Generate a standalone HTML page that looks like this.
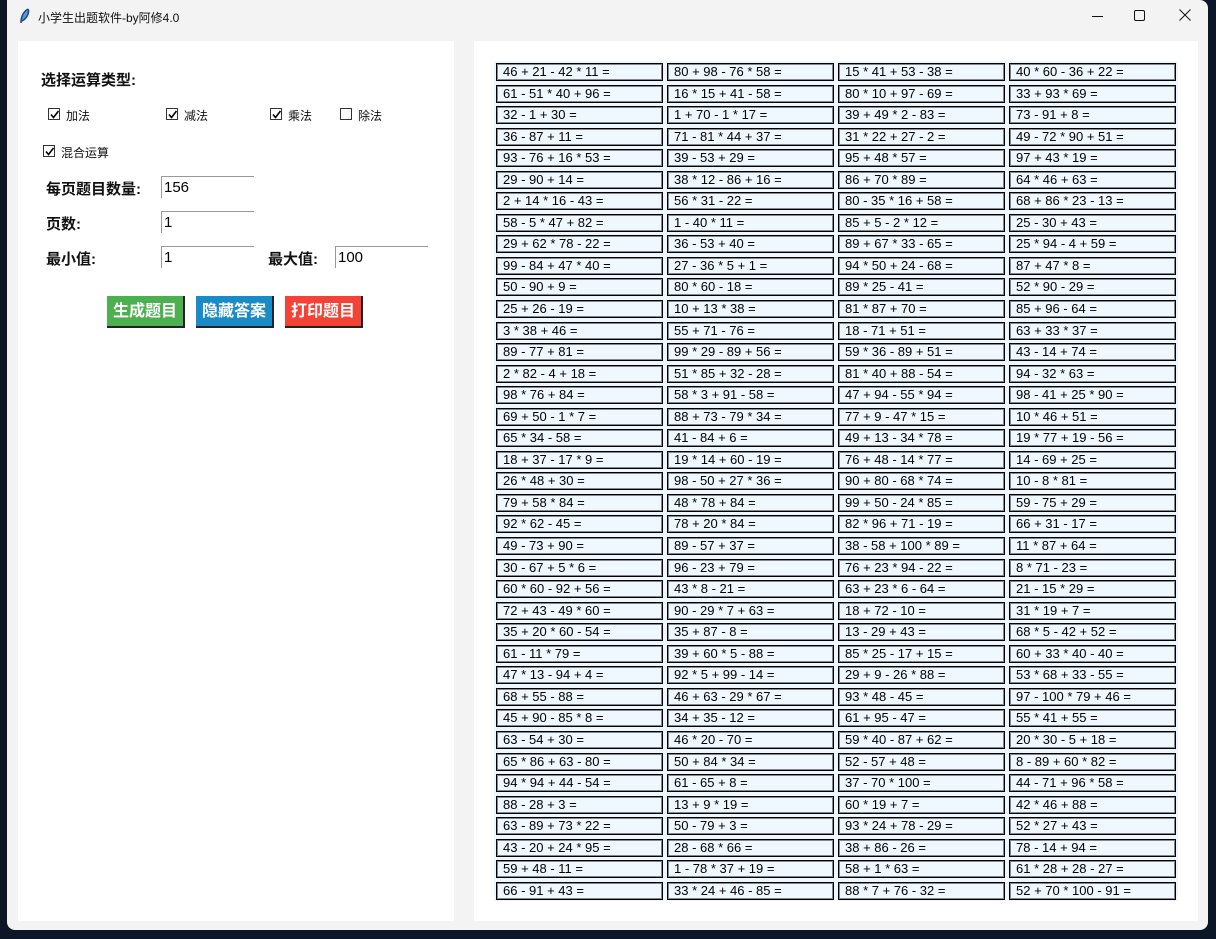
<!DOCTYPE html>
<html><head><meta charset="utf-8">
<style>
*{margin:0;padding:0;box-sizing:border-box}
body{width:1216px;height:939px;background:#0b1626;position:relative;overflow:hidden;font-family:"Liberation Sans","Noto Sans CJK SC",sans-serif}
.win{position:absolute;left:7px;top:0;width:1201px;height:930px;background:#f3f3f3;border-radius:0 8px 8px 8px}
.title{position:absolute;left:38px;top:9px;font-size:12px;color:#111}
.panel{position:absolute;background:#fff}
.abs{position:absolute;white-space:nowrap}
.lbl{font-size:15px;font-weight:bold;color:#111}
.cb{position:absolute;width:12px;height:12px;border:1px solid #333;background:#fff}
.cb svg{position:absolute;left:0;top:0}
.cbl{font-size:12px;color:#111}
.ent{position:absolute;height:22px;width:93px;border-top:1px solid #999;border-left:1px solid #999;font-size:15px;padding-left:2px;line-height:21px;color:#000}
.btn{position:absolute;top:296px;height:32px;width:78px;color:#fff;font-weight:bold;font-size:16px;text-align:center;line-height:31px;border-right:2px solid #222;border-bottom:2px solid #222}
.grid{position:absolute;top:61px;left:494px;width:684px;height:840px;background:#eef6fe}
.col{position:absolute;top:2px;width:167px}
.c{height:18px;margin-bottom:3.55px;border:1px solid #000;box-shadow:inset 0 0 0 1px rgba(0,0,0,.45);background:#f0f8ff;font-size:13px;line-height:16px;padding-left:6px;color:#000;white-space:nowrap}
</style></head><body>
<div class="win">
<svg class="abs" style="left:12px;top:8px" width="12" height="16" viewBox="0 0 12 16"><path d="M9 1 C4 4 2 9 2 15 M9 1 C11 5 7 11 3 13" stroke="#1a4f8a" stroke-width="1.6" fill="#5a9ad6"/></svg>
<div class="title" style="left:31px">小学生出题软件-by阿修4.0</div>
<svg class="abs" style="left:1084px;top:9px" width="14" height="14"><path d="M1 7.5H12" stroke="#111" stroke-width="1"/></svg>
<svg class="abs" style="left:1126px;top:9px" width="14" height="14"><rect x="1.5" y="1.5" width="10" height="10" rx="1.5" fill="none" stroke="#111"/></svg>
<svg class="abs" style="left:1171px;top:8px" width="14" height="14"><path d="M1.5 1.5L12.5 12.5M12.5 1.5L1.5 12.5" stroke="#111"/></svg>
</div>

<div class="panel" style="left:18px;top:41px;width:436px;height:880px"></div>
<div class="panel" style="left:474px;top:41px;width:724px;height:880px"></div>

<div class="abs lbl" style="left:41px;top:69px">选择运算类型:</div>

<div class="cb" style="left:48px;top:108px"><svg width="12" height="12"><path d="M2 5.5L4.5 8.5L9.5 2" stroke="#000" stroke-width="1.6" fill="none"/></svg></div>
<div class="abs cbl" style="left:66px;top:107px">加法</div>
<div class="cb" style="left:166px;top:108px"><svg width="12" height="12"><path d="M2 5.5L4.5 8.5L9.5 2" stroke="#000" stroke-width="1.6" fill="none"/></svg></div>
<div class="abs cbl" style="left:184px;top:107px">减法</div>
<div class="cb" style="left:270px;top:108px"><svg width="12" height="12"><path d="M2 5.5L4.5 8.5L9.5 2" stroke="#000" stroke-width="1.6" fill="none"/></svg></div>
<div class="abs cbl" style="left:288px;top:107px">乘法</div>
<div class="cb" style="left:340px;top:108px"></div>
<div class="abs cbl" style="left:358px;top:107px">除法</div>
<div class="cb" style="left:43px;top:145px"><svg width="12" height="12"><path d="M2 5.5L4.5 8.5L9.5 2" stroke="#000" stroke-width="1.6" fill="none"/></svg></div>
<div class="abs cbl" style="left:61px;top:144px">混合运算</div>

<div class="abs lbl" style="left:46px;top:178px">每页题目数量:</div>
<div class="ent" style="left:161px;top:176px">156</div>
<div class="abs lbl" style="left:46px;top:213px">页数:</div>
<div class="ent" style="left:161px;top:211px">1</div>
<div class="abs lbl" style="left:46px;top:248px">最小值:</div>
<div class="ent" style="left:161px;top:246px">1</div>
<div class="abs lbl" style="left:268px;top:248px">最大值:</div>
<div class="ent" style="left:335px;top:246px">100</div>

<div class="btn" style="left:107px;background:#4caf50">生成题目</div>
<div class="btn" style="left:196px;background:#1a8bc7">隐藏答案</div>
<div class="btn" style="left:285px;background:#f44336">打印题目</div>

<div class="grid"></div>
<div class="col" style="left:496px;top:63px">
<div class="c">46 + 21 - 42 * 11 =</div><div class="c">61 - 51 * 40 + 96 =</div><div class="c">32 - 1 + 30 =</div><div class="c">36 - 87 + 11 =</div><div class="c">93 - 76 + 16 * 53 =</div><div class="c">29 - 90 + 14 =</div><div class="c">2 + 14 * 16 - 43 =</div><div class="c">58 - 5 * 47 + 82 =</div><div class="c">29 + 62 * 78 - 22 =</div><div class="c">99 - 84 + 47 * 40 =</div><div class="c">50 - 90 + 9 =</div><div class="c">25 + 26 - 19 =</div><div class="c">3 * 38 + 46 =</div><div class="c">89 - 77 + 81 =</div><div class="c">2 * 82 - 4 + 18 =</div><div class="c">98 * 76 + 84 =</div><div class="c">69 + 50 - 1 * 7 =</div><div class="c">65 * 34 - 58 =</div><div class="c">18 + 37 - 17 * 9 =</div><div class="c">26 * 48 + 30 =</div><div class="c">79 + 58 * 84 =</div><div class="c">92 * 62 - 45 =</div><div class="c">49 - 73 + 90 =</div><div class="c">30 - 67 + 5 * 6 =</div><div class="c">60 * 60 - 92 + 56 =</div><div class="c">72 + 43 - 49 * 60 =</div><div class="c">35 + 20 * 60 - 54 =</div><div class="c">61 - 11 * 79 =</div><div class="c">47 * 13 - 94 + 4 =</div><div class="c">68 + 55 - 88 =</div><div class="c">45 + 90 - 85 * 8 =</div><div class="c">63 - 54 + 30 =</div><div class="c">65 * 86 + 63 - 80 =</div><div class="c">94 * 94 + 44 - 54 =</div><div class="c">88 - 28 + 3 =</div><div class="c">63 - 89 + 73 * 22 =</div><div class="c">43 - 20 + 24 * 95 =</div><div class="c">59 + 48 - 11 =</div><div class="c">66 - 91 + 43 =</div>
</div>
<div class="col" style="left:667px;top:63px">
<div class="c">80 + 98 - 76 * 58 =</div><div class="c">16 * 15 + 41 - 58 =</div><div class="c">1 + 70 - 1 * 17 =</div><div class="c">71 - 81 * 44 + 37 =</div><div class="c">39 - 53 + 29 =</div><div class="c">38 * 12 - 86 + 16 =</div><div class="c">56 * 31 - 22 =</div><div class="c">1 - 40 * 11 =</div><div class="c">36 - 53 + 40 =</div><div class="c">27 - 36 * 5 + 1 =</div><div class="c">80 * 60 - 18 =</div><div class="c">10 + 13 * 38 =</div><div class="c">55 + 71 - 76 =</div><div class="c">99 * 29 - 89 + 56 =</div><div class="c">51 * 85 + 32 - 28 =</div><div class="c">58 * 3 + 91 - 58 =</div><div class="c">88 + 73 - 79 * 34 =</div><div class="c">41 - 84 + 6 =</div><div class="c">19 * 14 + 60 - 19 =</div><div class="c">98 - 50 + 27 * 36 =</div><div class="c">48 * 78 + 84 =</div><div class="c">78 + 20 * 84 =</div><div class="c">89 - 57 + 37 =</div><div class="c">96 - 23 + 79 =</div><div class="c">43 * 8 - 21 =</div><div class="c">90 - 29 * 7 + 63 =</div><div class="c">35 + 87 - 8 =</div><div class="c">39 + 60 * 5 - 88 =</div><div class="c">92 * 5 + 99 - 14 =</div><div class="c">46 + 63 - 29 * 67 =</div><div class="c">34 + 35 - 12 =</div><div class="c">46 * 20 - 70 =</div><div class="c">50 + 84 * 34 =</div><div class="c">61 - 65 + 8 =</div><div class="c">13 + 9 * 19 =</div><div class="c">50 - 79 + 3 =</div><div class="c">28 - 68 * 66 =</div><div class="c">1 - 78 * 37 + 19 =</div><div class="c">33 * 24 + 46 - 85 =</div>
</div>
<div class="col" style="left:838px;top:63px">
<div class="c">15 * 41 + 53 - 38 =</div><div class="c">80 * 10 + 97 - 69 =</div><div class="c">39 + 49 * 2 - 83 =</div><div class="c">31 * 22 + 27 - 2 =</div><div class="c">95 + 48 * 57 =</div><div class="c">86 + 70 * 89 =</div><div class="c">80 - 35 * 16 + 58 =</div><div class="c">85 + 5 - 2 * 12 =</div><div class="c">89 + 67 * 33 - 65 =</div><div class="c">94 * 50 + 24 - 68 =</div><div class="c">89 * 25 - 41 =</div><div class="c">81 * 87 + 70 =</div><div class="c">18 - 71 + 51 =</div><div class="c">59 * 36 - 89 + 51 =</div><div class="c">81 * 40 + 88 - 54 =</div><div class="c">47 + 94 - 55 * 94 =</div><div class="c">77 + 9 - 47 * 15 =</div><div class="c">49 + 13 - 34 * 78 =</div><div class="c">76 + 48 - 14 * 77 =</div><div class="c">90 + 80 - 68 * 74 =</div><div class="c">99 + 50 - 24 * 85 =</div><div class="c">82 * 96 + 71 - 19 =</div><div class="c">38 - 58 + 100 * 89 =</div><div class="c">76 + 23 * 94 - 22 =</div><div class="c">63 + 23 * 6 - 64 =</div><div class="c">18 + 72 - 10 =</div><div class="c">13 - 29 + 43 =</div><div class="c">85 * 25 - 17 + 15 =</div><div class="c">29 + 9 - 26 * 88 =</div><div class="c">93 * 48 - 45 =</div><div class="c">61 + 95 - 47 =</div><div class="c">59 * 40 - 87 + 62 =</div><div class="c">52 - 57 + 48 =</div><div class="c">37 - 70 * 100 =</div><div class="c">60 * 19 + 7 =</div><div class="c">93 * 24 + 78 - 29 =</div><div class="c">38 + 86 - 26 =</div><div class="c">58 + 1 * 63 =</div><div class="c">88 * 7 + 76 - 32 =</div>
</div>
<div class="col" style="left:1009px;top:63px">
<div class="c">40 * 60 - 36 + 22 =</div><div class="c">33 + 93 * 69 =</div><div class="c">73 - 91 + 8 =</div><div class="c">49 - 72 * 90 + 51 =</div><div class="c">97 + 43 * 19 =</div><div class="c">64 * 46 + 63 =</div><div class="c">68 + 86 * 23 - 13 =</div><div class="c">25 - 30 + 43 =</div><div class="c">25 * 94 - 4 + 59 =</div><div class="c">87 + 47 * 8 =</div><div class="c">52 * 90 - 29 =</div><div class="c">85 + 96 - 64 =</div><div class="c">63 + 33 * 37 =</div><div class="c">43 - 14 + 74 =</div><div class="c">94 - 32 * 63 =</div><div class="c">98 - 41 + 25 * 90 =</div><div class="c">10 * 46 + 51 =</div><div class="c">19 * 77 + 19 - 56 =</div><div class="c">14 - 69 + 25 =</div><div class="c">10 - 8 * 81 =</div><div class="c">59 - 75 + 29 =</div><div class="c">66 + 31 - 17 =</div><div class="c">11 * 87 + 64 =</div><div class="c">8 * 71 - 23 =</div><div class="c">21 - 15 * 29 =</div><div class="c">31 * 19 + 7 =</div><div class="c">68 * 5 - 42 + 52 =</div><div class="c">60 + 33 * 40 - 40 =</div><div class="c">53 * 68 + 33 - 55 =</div><div class="c">97 - 100 * 79 + 46 =</div><div class="c">55 * 41 + 55 =</div><div class="c">20 * 30 - 5 + 18 =</div><div class="c">8 - 89 + 60 * 82 =</div><div class="c">44 - 71 + 96 * 58 =</div><div class="c">42 * 46 + 88 =</div><div class="c">52 * 27 + 43 =</div><div class="c">78 - 14 + 94 =</div><div class="c">61 * 28 + 28 - 27 =</div><div class="c">52 + 70 * 100 - 91 =</div>
</div>
</body></html>
